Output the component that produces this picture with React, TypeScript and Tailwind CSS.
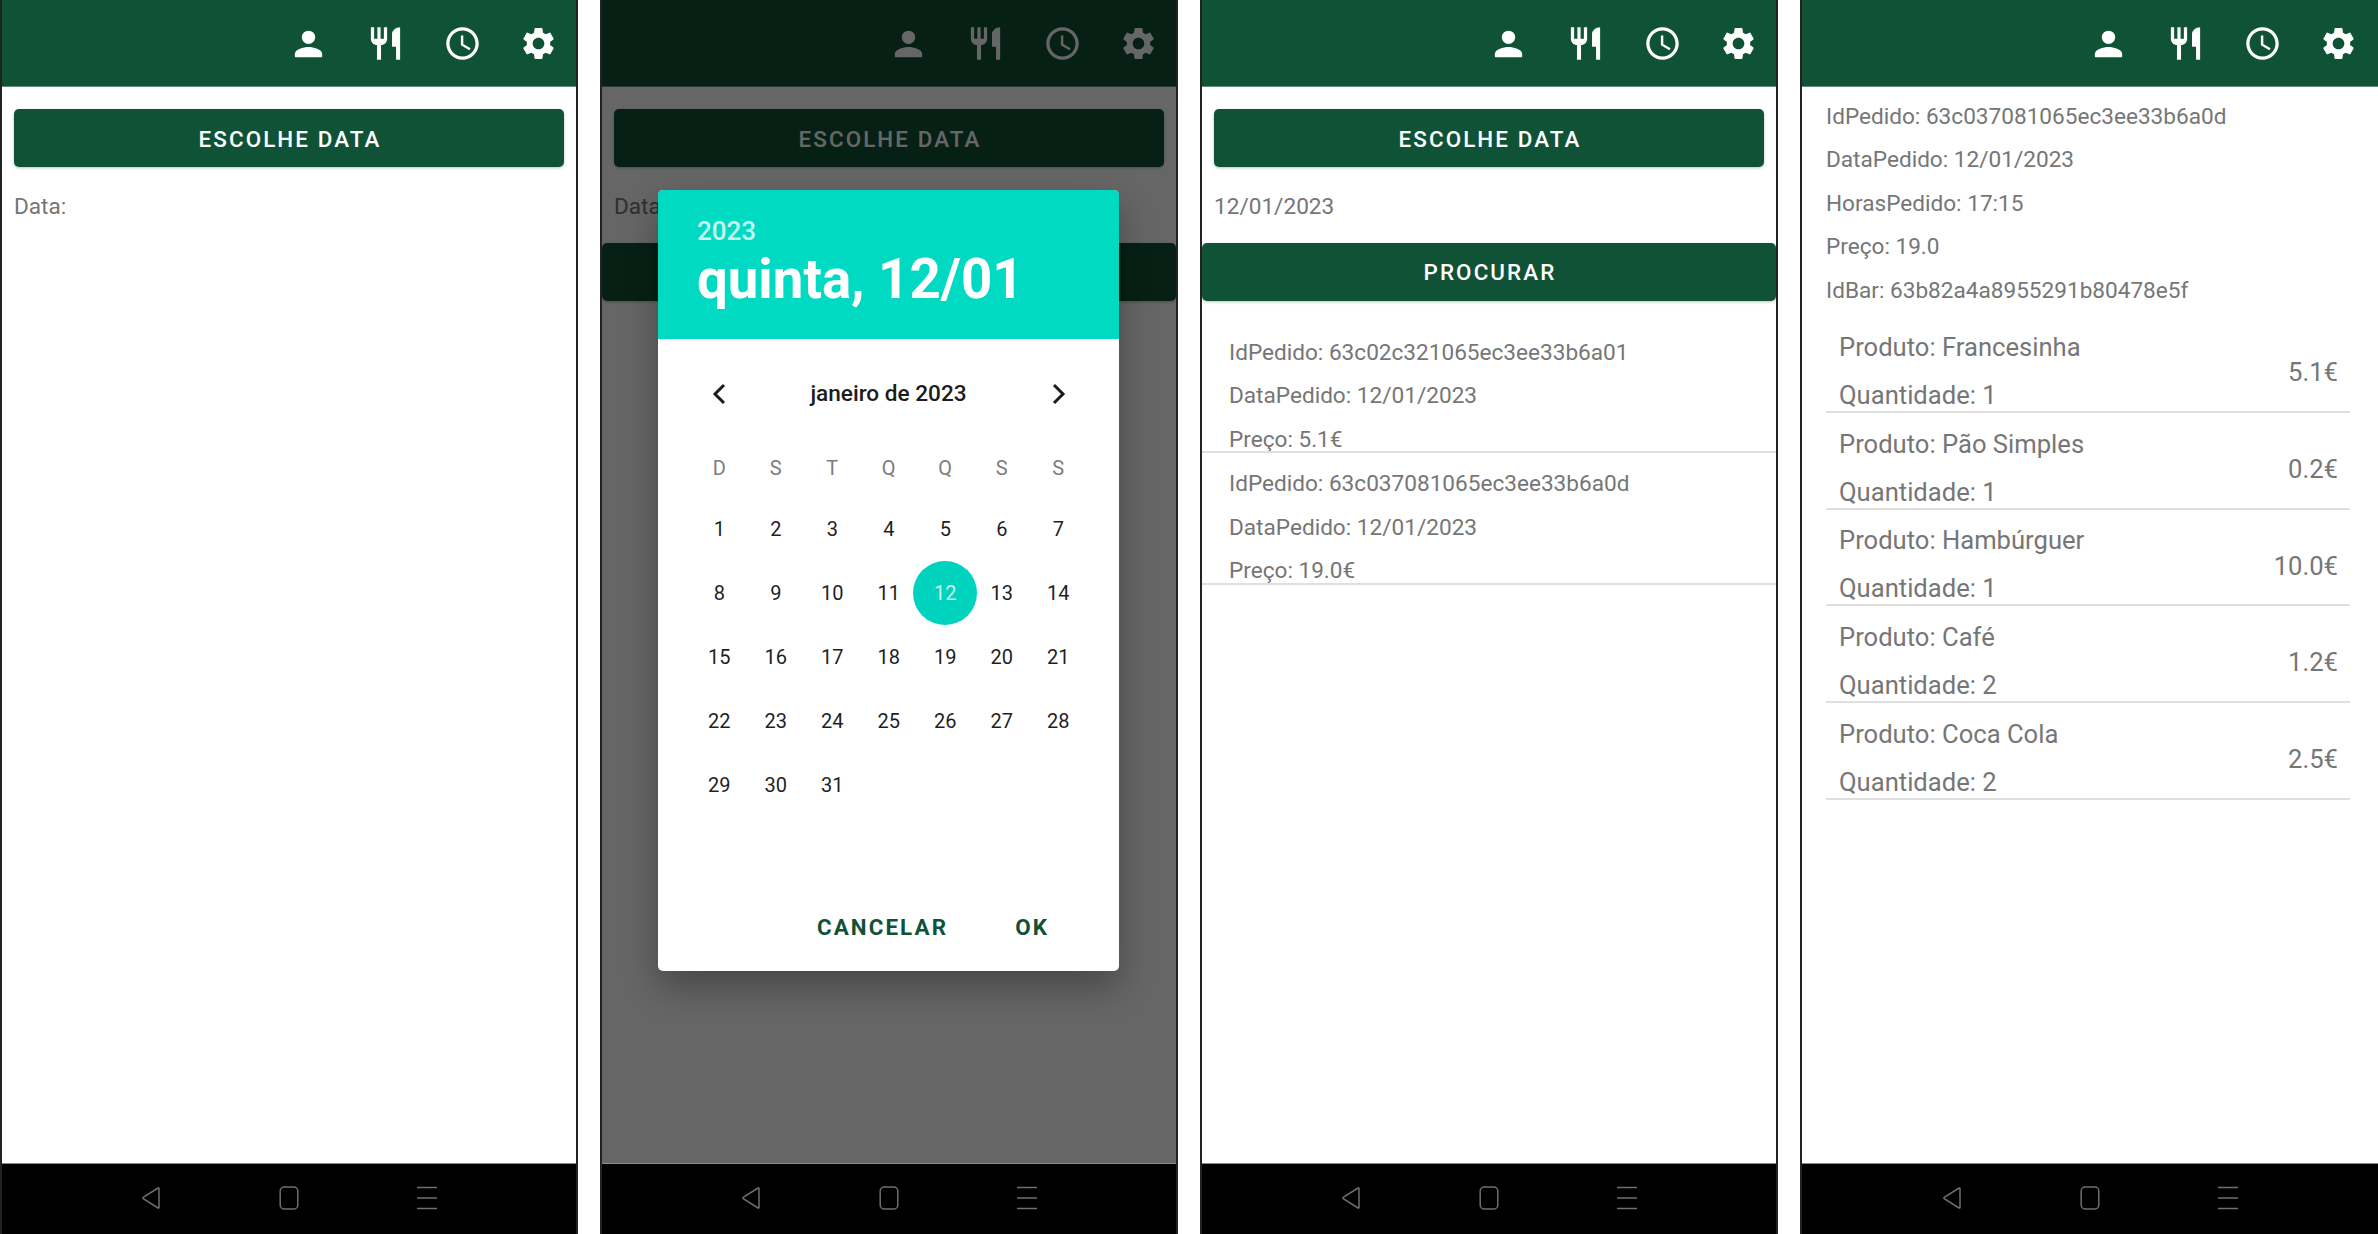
import React from "react";

const Person = () => (
  <svg viewBox="0 0 24 24" className="w-[39px] h-[39px] -translate-x-[1px]" fill="#ffffff">
    <circle cx="12" cy="8.2" r="4.1" />
    <path d="M3.6 20v-1.6C3.6 15.6 9 14.2 12 14.2s8.4 1.4 8.4 4.2V20c0 .3-.2.5-.5.5H4.1c-.3 0-.5-.2-.5-.5z" />
  </svg>
);
const Fork = () => (
  <svg viewBox="0 0 24 24" className="w-[39px] h-[39px]" fill="#ffffff">
    <path d="M11 9H9V2H7v7H5V2H3v7c0 2.12 1.66 3.84 3.75 3.97V22h2.5v-9.03C11.34 12.84 13 11.12 13 9V2h-2v7zm5-3v8h2.5v8H21V2c-2.76 0-5 2.24-5 4z" />
  </svg>
);
const Clock = () => (
  <svg viewBox="0 0 24 24" className="w-[39px] h-[39px]" fill="#ffffff">
    <path d="M11.99 2C6.47 2 2 6.48 2 12s4.47 10 9.99 10C17.52 22 22 17.52 22 12S17.52 2 11.99 2zM12 20c-4.42 0-8-3.58-8-8s3.58-8 8-8 8 3.58 8 8-3.58 8-8 8zm.5-13H11v6l5.25 3.15.75-1.23-4.5-2.67z" />
  </svg>
);
const Gear = () => (
  <svg viewBox="0 0 24 24" className="w-[39px] h-[39px]" fill="#ffffff">
    <path d="M19.14 12.94c.04-.3.06-.61.06-.94 0-.32-.02-.64-.07-.94l2.03-1.58c.18-.14.23-.41.12-.61l-1.92-3.32c-.12-.22-.37-.29-.59-.22l-2.39.96c-.5-.38-1.03-.7-1.62-.94l-.36-2.54c-.04-.24-.24-.41-.48-.41h-3.84c-.24 0-.43.17-.47.41l-.36 2.54c-.59.24-1.13.57-1.62.94l-2.39-.96c-.22-.08-.47 0-.59.22L2.74 8.87c-.12.21-.08.47.12.61l2.03 1.58c-.05.3-.09.63-.09.94s.02.64.07.94l-2.03 1.58c-.18.14-.23.41-.12.61l1.92 3.32c.12.22.37.29.59.22l2.39-.96c.5.38 1.03.7 1.62.94l.36 2.54c.05.24.24.41.48.41h3.84c.24 0 .44-.17.47-.41l.36-2.54c.59-.24 1.13-.56 1.62-.94l2.39.96c.22.08.47 0 .59-.22l1.92-3.32c.12-.22.07-.47-.12-.61l-2.01-1.58zM12 15.6c-1.98 0-3.6-1.62-3.6-3.6s1.62-3.6 3.6-3.6 3.6 1.62 3.6 3.6-1.62 3.6-3.6 3.6z" />
  </svg>
);

const Header = ({ padding = "pr-[18px]" }: { padding?: string }) => (
  <div className={"h-[87px] shrink-0 bg-[#0f5236] flex items-center justify-end gap-[37.5px] border-b border-[#5f8f7c] " + padding}>
    <Person />
    <Fork />
    <Clock />
    <Gear />
  </div>
);

const NavBar = () => (
  <div className="h-[71px] shrink-0 bg-black flex items-center justify-center gap-[118px] pb-[2px] border-t border-[#8a8a8a]">
    <svg viewBox="0 0 20 24" className="w-[20px] h-[24px]" fill="none" stroke="#6f6f6f" strokeWidth="1.5">
      <path d="M18 2.5v19a.6.6 0 0 1-.9.5L2.2 12.6a.7.7 0 0 1 0-1.2L17.1 2a.6.6 0 0 1 .9.5z" strokeLinejoin="round" />
    </svg>
    <svg viewBox="0 0 20 24" className="w-[20px] h-[24px]" fill="none" stroke="#6f6f6f" strokeWidth="1.5">
      <rect x="1.2" y="1" width="17.6" height="22" rx="4" />
    </svg>
    <svg viewBox="0 0 20 24" className="w-[20px] h-[24px]" fill="none" stroke="#6f6f6f" strokeWidth="1.5">
      <path d="M0 1.5h20M0 12h20M0 22.5h20" />
    </svg>
  </div>
);

const GreenButton = ({ label, className }: { label?: string; className: string }) => (
  <div
    className={
      "h-[58px] rounded-[5px] bg-[#0f5236] text-white text-[22.4px] font-medium tracking-[2.1px] pt-[3px] pl-[2px] flex items-center justify-center shadow-[0_1px_3px_rgba(0,0,0,0.25)] " +
      className
    }
  >
    {label}
  </div>
);

const Line = ({ children }: { children: React.ReactNode }) => (
  <div className="h-[43.5px] leading-[43.5px] text-[22.6px] text-[#767676] whitespace-nowrap">{children}</div>
);

const weekdays = ["D", "S", "T", "Q", "Q", "S", "S"];
const days = Array.from({ length: 31 }, (_, i) => i + 1);

const DatePicker = () => (
  <div className="absolute left-[56px] top-[190px] w-[461px] h-[781px] bg-white rounded-[5px] overflow-hidden shadow-[0_16px_36px_rgba(0,0,0,0.3)] flex flex-col">
    <div className="h-[149px] shrink-0 bg-[#00dac3] pl-[39px] pt-[24px] text-white">
      <div className="text-[26px] font-medium leading-[34px] text-[#c8f7f0]">2023</div>
      <div className="text-[54.6px] font-bold leading-[62px]">quinta, 12/01</div>
    </div>
    <div className="flex items-center justify-between px-[53px] pt-[36px] h-[74px] text-[#1c1c1c]">
      <svg viewBox="0 0 16 24" className="w-[16px] h-[24px]" fill="none" stroke="#1c1c1c" strokeWidth="3">
        <path d="M13 3 4 12l9 9" />
      </svg>
      <div className="text-[22.6px] font-medium">janeiro de 2023</div>
      <svg viewBox="0 0 16 24" className="w-[16px] h-[24px] translate-x-[1px]" fill="none" stroke="#1c1c1c" strokeWidth="3">
        <path d="M3 3l9 9-9 9" />
      </svg>
    </div>
    <div className="pl-[33px] pt-[20px] grid grid-cols-[repeat(7,56.5px)] auto-rows-[64px] text-[20px] text-[#1f1f1f]">
      {weekdays.map((d, i) => (
        <div key={i} className="h-[69px] flex items-center justify-center text-[#7d7d7d]">
          {d}
        </div>
      ))}
      {days.map((d) => (
        <div key={d} className="flex items-center justify-center">
          {d === 12 ? (
            <div className="w-[64px] h-[64px] shrink-0 rounded-full bg-[#00d3bd] text-[#c8f7f0] flex items-center justify-center">12</div>
          ) : (
            d
          )}
        </div>
      ))}
    </div>
    <div className="mt-auto h-[90px] flex items-start justify-end gap-[67px] pr-[70px] pt-[30px] text-[22.4px] font-bold tracking-[2.1px] text-[#0f5236]">
      <div>CANCELAR</div>
      <div>OK</div>
    </div>
  </div>
);

const Phone = ({ children, width = "w-[578px] border-x-2" }: { children: React.ReactNode; width?: string }) => (
  <div className={"relative h-[1234px] shrink-0 flex flex-col border-[#222222] bg-white overflow-hidden " + width}>
    {children}
  </div>
);

const products = [
  ["Francesinha", "1", "5.1€"],
  ["Pão Simples", "1", "0.2€"],
  ["Hambúrguer", "1", "10.0€"],
  ["Café", "2", "1.2€"],
  ["Coca Cola", "2", "2.5€"],
];

export default function App() {
  return (
    <div className="w-[2378px] h-[1234px] bg-white flex gap-[22px] overflow-hidden [font-family:Roboto,sans-serif]">
      <Phone>
        <Header />
        <div className="flex-1 flex flex-col pt-[22px]">
          <GreenButton label="ESCOLHE DATA" className="mx-[12px]" />
          <div className="mt-[18px] ml-[12px]">
            <Line>Data:</Line>
          </div>
        </div>
        <NavBar />
      </Phone>

      <Phone>
        <Header />
        <div className="flex-1 flex flex-col pt-[22px]">
          <GreenButton label="ESCOLHE DATA" className="mx-[12px]" />
          <div className="mt-[18px] ml-[12px]">
            <Line>Data:</Line>
          </div>
          <GreenButton className="mt-[14px]" />
        </div>
        <NavBar />
        <div className="absolute left-0 right-0 top-0 bottom-[71px] bg-black/60" />
        <DatePicker />
      </Phone>

      <Phone>
        <Header />
        <div className="flex-1 flex flex-col pt-[22px]">
          <GreenButton label="ESCOLHE DATA" className="mx-[12px]" />
          <div className="mt-[18px] ml-[12px]">
            <Line>12/01/2023</Line>
          </div>
          <GreenButton label="PROCURAR" className="mt-[14px]" />
          <div className="pt-[30px]">
            <div className="pl-[27px] h-[122.5px] border-b-2 border-[#dfdfdf] overflow-hidden">
              <Line>IdPedido: 63c02c321065ec3ee33b6a01</Line>
              <Line>DataPedido: 12/01/2023</Line>
              <Line>Preço: 5.1€</Line>
            </div>
            <div className="pl-[27px] pt-[9px] h-[132px] border-b-2 border-[#dfdfdf] overflow-hidden">
              <Line>IdPedido: 63c037081065ec3ee33b6a0d</Line>
              <Line>DataPedido: 12/01/2023</Line>
              <Line>Preço: 19.0€</Line>
            </div>
          </div>
        </div>
        <NavBar />
      </Phone>

      <Phone width="w-[578px] border-l-2">
        <Header padding="pr-[20px]" />
        <div className="flex-1 flex flex-col pt-[7.5px] pl-[24px]">
          <Line>IdPedido: 63c037081065ec3ee33b6a0d</Line>
          <Line>DataPedido: 12/01/2023</Line>
          <Line>HorasPedido: 17:15</Line>
          <Line>Preço: 19.0</Line>
          <Line>IdBar: 63b82a4a8955291b80478e5f</Line>
          <div className="w-[524px] mt-[4px]">
            {products.map(([name, qty, price]) => (
              <div key={name} className="h-[96.75px] pt-[15px] pl-[13px] pr-[12px] flex items-center justify-between border-b-2 border-[#dfdfdf] text-[25.6px] text-[#767676]">
                <div>
                  <div className="h-[48px] leading-[48px]">Produto: {name}</div>
                  <div className="h-[48px] leading-[48px]">Quantidade: {qty}</div>
                </div>
                <div className="pt-[3px]">{price}</div>
              </div>
            ))}
          </div>
        </div>
        <NavBar />
      </Phone>
    </div>
  );
}
